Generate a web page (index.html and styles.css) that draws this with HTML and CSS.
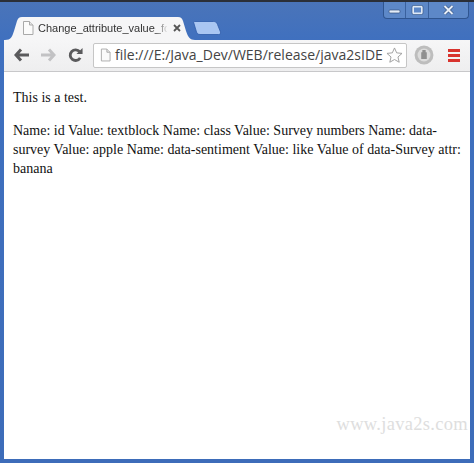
FILE: index.html
```html
<!DOCTYPE html>
<html lang="en">
<head>
<meta charset="utf-8">
<title>Change_attribute_value</title>
<link rel="stylesheet" href="styles.css">
</head>
<body>
<div class="window">
  <div class="controls">
    <span class="ctl ctl-min"><svg width="13" height="8" viewBox="0 0 13 8"><rect x="1" y="4" width="11" height="3" rx="1" fill="#e4edf8" stroke="#33507f" stroke-width=".7"/></svg></span>
    <span class="ctl ctl-max"><svg width="13" height="10" viewBox="0 0 13 10"><rect x="2" y="1.500" width="9" height="7" rx="1" fill="none" stroke="#dfe9f6" stroke-width="2"/><rect x="1" y=".5" width="11" height="9" rx="1.500" fill="none" stroke="#33507f" stroke-width=".6"/></svg></span>
    <span class="ctl ctl-close"><svg width="13" height="10" viewBox="0 0 13 10"><path d="M2.500 1l8 8M10.500 1l-8 8" stroke="#33507f" stroke-width="3.200"/><path d="M2.500 1l8 8M10.500 1l-8 8" stroke="#e8eff9" stroke-width="2"/></svg></span>
  </div>
  <div class="tabstrip">
    <div class="tab">
      <svg class="tab-bg" width="190" height="23" viewBox="0 0 190 23"><path d="M0 23c6 0 7-3 9-9l3-10c1-2.500 2-4 5-4h156c3 0 4 1.500 5 4l3 10c2 6 4 9 9 9z" fill="#f6f6f7"/></svg>
      <svg class="page-icon" width="12" height="14" viewBox="0 0 12 14"><path d="M1.500.5h6l3.500 3.500v9.500h-9.500z" fill="#fbfbfb" stroke="#a9a9a9"/><path d="M7.500.5v3.500h3.500" fill="#e6e6e6" stroke="#a9a9a9"/></svg>
      <span class="tab-title">Change_attribute_value_fc</span>
      <svg class="tab-close" width="8" height="8" viewBox="0 0 8 8"><path d="M1 1l6 6M7 1l-6 6" stroke="#555" stroke-width="1.800"/></svg>
    </div>
    <svg class="newtab" width="29" height="14" viewBox="0 0 29 14"><path d="M1.500.5h19c2 0 3 .5 4 3l3 7.500c.5 1.500-.5 2.500-2 2.500H7c-2 0-3-1-3.500-2.500L.8 2c-.3-1 0-1.500.7-1.500z" fill="#a9c6f2" stroke="#2d5ba8" stroke-width=".8"/></svg>
  </div>
  <div class="toolbar">
    <svg class="nav" width="15" height="14" viewBox="0 0 15 14"><path d="M7 1.500L2 7l5 5.500M2.500 7H15" fill="none" stroke="#5a5a5c" stroke-width="3"/></svg>
    <svg class="nav" width="15" height="14" viewBox="0 0 15 14"><path d="M8 1.500L13 7l-5 5.500M12.500 7H0" fill="none" stroke="#c2c2c4" stroke-width="3"/></svg>
    <svg class="nav nav-last" width="15" height="15" viewBox="0 0 16 16"><path d="M13 10.500A5.700 5.700 0 1 1 12.500 4" fill="none" stroke="#5a5a5c" stroke-width="3"/><path d="M9 6.500h6.500V0z" fill="#5a5a5c"/></svg>
    <div class="omnibox">
      <svg class="page-icon" width="12" height="14" viewBox="0 0 12 14"><path d="M1.500.5h6l3.500 3.500v9.500h-9.500z" fill="#fbfbfb" stroke="#a9a9a9"/><path d="M7.500.5v3.500h3.500" fill="#e6e6e6" stroke="#a9a9a9"/></svg>
      <span class="url">file:///E:/Java_Dev/WEB/release/java2sIDE</span>
      <svg class="star" width="17" height="16" viewBox="0 0 18 17"><path d="M9 1l2.300 5.200 5.700.6-4.300 3.800 1.300 5.600L9 13.300 4 16.200l1.300-5.600L1 6.800l5.700-.6z" fill="#fdfdfd" stroke="#9d9d9d"/></svg>
    </div>
    <svg class="ext" width="20" height="20" viewBox="0 0 18 18"><circle cx="9" cy="9" r="8.500" fill="#bdbdbd"/><circle cx="9" cy="9" r="5.800" fill="#dcdcdc"/><path d="M6.500 12.500V6.500h1V4.500h3v2h1v6z" fill="#8f8f8f"/></svg>
    <span class="menu"><i></i><i></i><i></i></span>
  </div>
  <main class="content">
    <p>This is a test.</p>
    <p>Name: id Value: textblock Name: class Value: Survey numbers Name: data-survey Value: apple Name: data-sentiment Value: like Value of data-Survey attr: banana</p>
    <div class="watermark">www.java2s.com</div>
  </main>
</div>
</body>
</html>
```
FILE: styles.css
```css
html, body { margin: 0; padding: 0; }
body { width: 474px; height: 463px; overflow: hidden; background: #3d6cb9; }
.window {
  position: relative;
  box-sizing: border-box;
  width: 474px;
  height: 463px;
  padding: 0 4px 4px;
  display: flex;
  flex-direction: column;
  border-top: 2px solid #2b2f38;
  background: linear-gradient(#4a74b9 0, #3f70bf 40px, #3d6cb9 100%);
}
.controls {
  position: absolute;
  top: 0;
  right: 5px;
  display: flex;
  height: 16px;
  border: 1px solid #2f5590;
  border-top: 0;
  border-radius: 0 0 4px 4px;
  background: #5d88c8;
}
.ctl { display: flex; align-items: center; justify-content: center; height: 16px; border-right: 1px solid #3a619e; }
.ctl-min { width: 21px; }
.ctl-max { width: 22px; }
.ctl-close { width: 39px; border-right: 0; }
.tabstrip {
  height: 38px;
  display: flex;
  align-items: flex-end;
  flex: none;
}
.tab {
  position: relative;
  width: 190px;
  height: 23px;
  margin-left: 1px;
  box-sizing: border-box;
  padding: 4px 0 0 17px;
  display: flex;
  align-items: flex-start;
  flex: none;
}
.tab-bg { position: absolute; left: 0; top: 0; }
.tab .page-icon { position: relative; }
.tab-title {
  position: relative;
  margin-left: 4px;
  width: 129px;
  white-space: nowrap;
  font: 11px/15px "Liberation Sans", sans-serif;
  color: #333;
  -webkit-mask-image: linear-gradient(90deg, #000 118px, transparent 130px);
  mask-image: linear-gradient(90deg, #000 118px, transparent 130px);
}
.tab-close { position: relative; margin: 3px 0 0 6px; }
.newtab { margin: 0 0 5px -2px; flex: none; }
.toolbar {
  height: 32px;
  flex: none;
  box-sizing: border-box;
  display: flex;
  align-items: center;
  padding: 0 0 1px 10px;
  background: linear-gradient(#f6f6f7, #eeeeef);
  border-bottom: 1px solid #c8c8ca;
}
.nav { flex: none; margin-right: 12px; }
.nav-last { margin-right: 10px; }
.omnibox {
  width: 314px;
  height: 25px;
  flex: none;
  box-sizing: border-box;
  display: flex;
  align-items: center;
  padding: 0 3px 0 6px;
  background: #fff;
  border: 1px solid #c6c6c6;
  border-radius: 2px;
  overflow: hidden;
}
.url {
  margin-left: 4px;
  width: 268px;
  white-space: nowrap;
  flex: none;
  font: 14px/20px "Open Sans", "Liberation Sans", sans-serif;
  color: #444;
}
.star { flex: none; margin-left: 3px; }
.ext { flex: none; margin-left: 7px; }
.menu { flex: none; margin-left: 14px; display: flex; flex-direction: column; gap: 2px; }
.menu i { display: block; width: 12px; height: 3px; background: #d8332e; }
.content {
  position: relative;
  flex: 1;
  background: #fff;
  padding: 2px 8px 0 9px;
  font: 14px/19px "Liberation Serif", serif;
  color: #111;
}
.content p { margin: 14px 0; }
.watermark {
  position: absolute;
  right: 2px;
  bottom: 24px;
  font: 18.5px/22px "Liberation Serif", serif;
  color: #dedede;
  letter-spacing: .3px;
}
```
